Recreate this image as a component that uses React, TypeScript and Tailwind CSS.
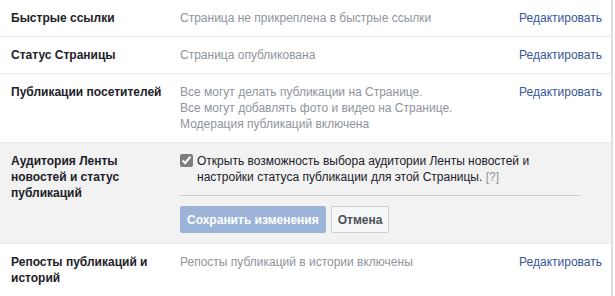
import React from 'react';

const font = { fontFamily: '"Liberation Sans", Arial, Helvetica, sans-serif' };

function Row({
  label,
  lines,
  last,
}: {
  label: React.ReactNode;
  lines: string[];
  last?: boolean;
}) {
  return (
    <div
      className={`flex py-[10px] pl-[11px] pr-[9px] ${
        last ? '' : 'border-b border-[#e9ebee]'
      }`}
    >
      <div className="w-[169px] shrink-0 pr-3 font-bold text-[#1d2129]">{label}</div>
      <div className="flex-1 text-[#90949c]">
        {lines.map((l) => (
          <div key={l}>{l}</div>
        ))}
      </div>
      <a className="shrink-0 text-[#365899] cursor-pointer">Редактировать</a>
    </div>
  );
}

export default function App() {
  return (
    <div className="bg-white h-[296px] w-[615px] overflow-hidden" style={font}>
      <div className="w-[613px] border-r-2 border-[#dddfe2] text-[12px] leading-4 min-h-[296px]">
        <Row label="Быстрые ссылки" lines={['Страница не прикреплена в быстрые ссылки']} />
        <Row label="Статус Страницы" lines={['Страница опубликована']} />
        <Row
          label="Публикации посетителей"
          lines={[
            'Все могут делать публикации на Странице.',
            'Все могут добавлять фото и видео на Странице.',
            'Модерация публикаций включена',
          ]}
        />

        {/* Expanded editor */}
        <div className="flex bg-[#f2f2f2] border-b border-[#e9ebee] pt-[10px] pb-[10px] pl-[11px]">
          <div className="w-[169px] shrink-0 pr-3 font-bold text-[#1d2129]">
            Аудитория Ленты
            <br />
            новостей и статус
            <br />
            публикаций
          </div>
          <div className="w-[400px]">
            <label className="flex text-[#1d2129]">
              <input
                type="checkbox"
                defaultChecked
                className="w-[13px] h-[13px] mt-[1px] mr-[4px] shrink-0 accent-[#7d7d7d]"
              />
              <span>
                Открыть возможность выбора аудитории Ленты новостей и
                <br />
                настройки статуса публикации для этой Страницы.{' '}
                <span className="text-[#90949c]">[?]</span>
              </span>
            </label>
            <div className="mt-[10px] border-t border-[#ccd0d5]" />
            <div className="mt-[10px] flex gap-[5px]">
              <button className="h-[27px] px-[6px] rounded-[2px] bg-[#9cb4d8] border border-[#9cb4d8] text-white font-bold">
                Сохранить изменения
              </button>
              <button className="h-[27px] px-[6px] rounded-[2px] bg-[#f6f7f9] border border-[#ced0d4] text-[#4b4f56] font-bold">
                Отмена
              </button>
            </div>
          </div>
        </div>

        <Row
          label={
            <>
              Репосты публикаций и
              <br />
              историй
            </>
          }
          lines={['Репосты публикаций в истории включены']}
          last
        />
      </div>
    </div>
  );
}
